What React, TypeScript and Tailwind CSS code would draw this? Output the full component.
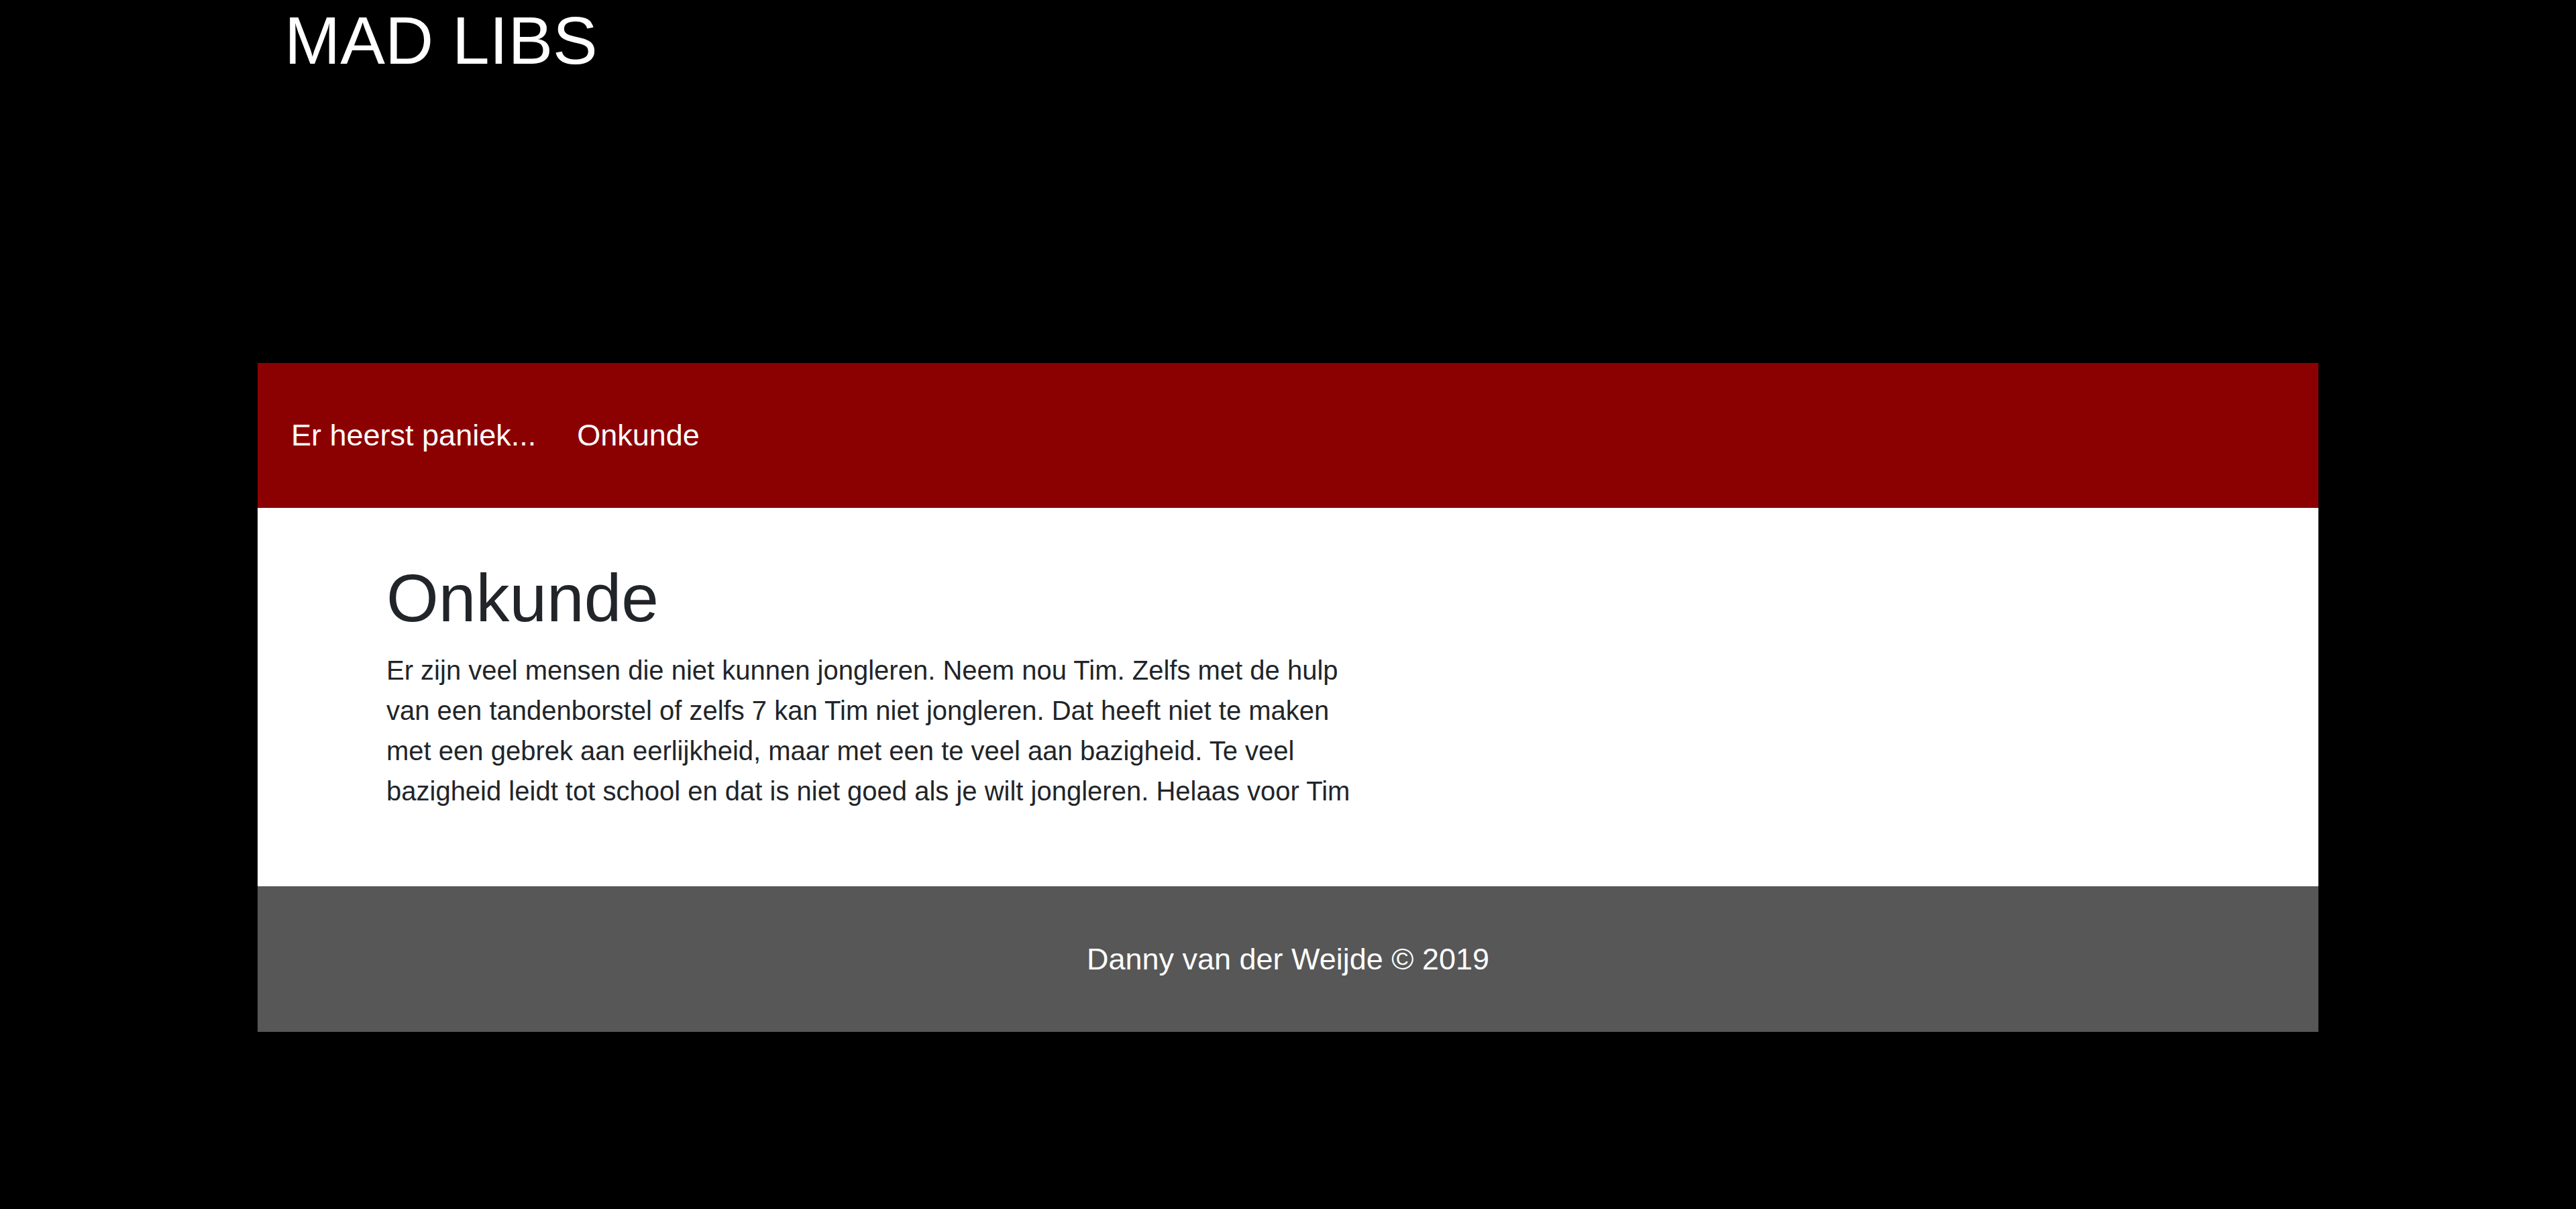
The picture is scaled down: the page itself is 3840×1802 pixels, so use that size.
const navLinks = ['Er heerst paniek...', 'Onkunde'];

const App = () => {
  return (
    <div className="min-h-[1802px] bg-black font-['Liberation_Sans',Arial,sans-serif]">
      <div className="w-[3072px] mx-auto">
        <header className="h-[541px]">
          <h1 className="pl-[40px] text-[100px] leading-[1.2] text-white">MAD LIBS</h1>
        </header>
        <nav className="h-[216px] bg-[#8b0000] flex items-center pl-[50px] gap-[61px]">
          {navLinks.map((label) => (
            <a key={label} href="#" className="text-[45px] text-white no-underline">
              {label}
            </a>
          ))}
        </nav>
        <main className="bg-white pt-[74px] pb-[112px] pl-[192px]">
          <h2 className="mb-[18px] text-[100px] leading-[1.2] text-[#212529]">Onkunde</h2>
          <p className="w-[1460px] text-[40px] leading-[60px] text-[#212529]">
            Er zijn veel mensen die niet kunnen jongleren. Neem nou Tim. Zelfs met de hulp van een
            tandenborstel of zelfs 7 kan Tim niet jongleren. Dat heeft niet te maken met een gebrek aan
            eerlijkheid, maar met een te veel aan bazigheid. Te veel bazigheid leidt tot school en dat is
            niet goed als je wilt jongleren. Helaas voor Tim
          </p>
        </main>
        <footer className="h-[217px] bg-[#575757] flex items-center justify-center">
          <span className="text-[45px] text-white">Danny van der Weijde © 2019</span>
        </footer>
      </div>
    </div>
  );
};

export default App;
